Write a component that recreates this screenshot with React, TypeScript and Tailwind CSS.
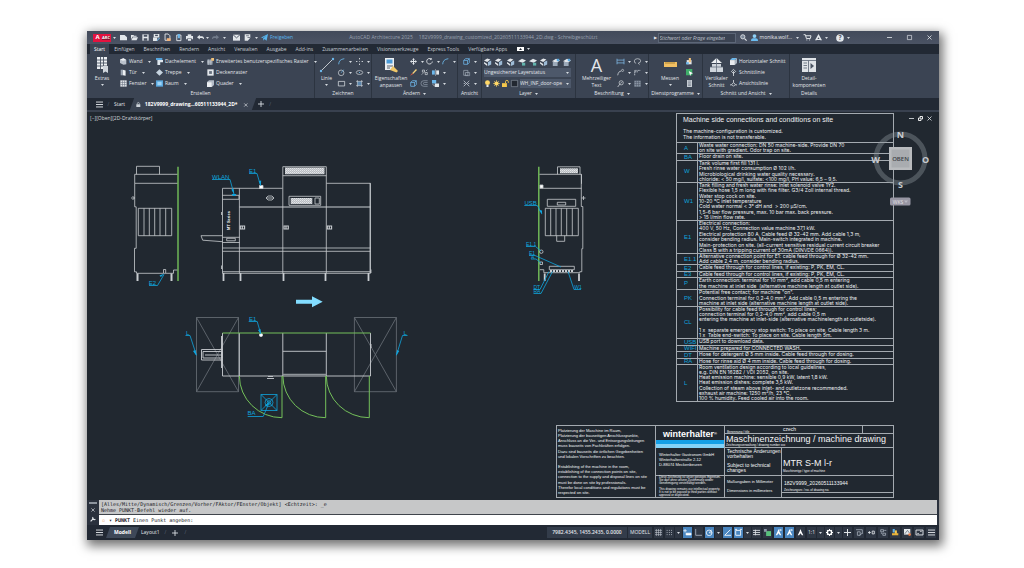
import React from 'react';

const LIGHT = '#e3e7eb';
const SKY = '#6db7ea';

const glyphs: Record<string, React.ReactNode> = {
  newFile: <path d="M0 1.500h6.500l3.500 3V9H0z" fill={LIGHT} />,
  open: <><path d="M0 1.500h3.500l1 1H8V4H2L0 8z" fill={LIGHT} /><path d="M2.500 4.800H10L8 9H.6z" fill={LIGHT} /></>,
  save: <><path d="M.5.5h9v9h-9z" fill={LIGHT} /><path d="M2.500 1h5v3h-5zM2.500 6h5v3.500h-5z" fill="#4a5262" /></>,
  saveAs: <><path d="M1 0h8v5H1z" fill={LIGHT} /><path d="M3 1h4v2H3z" fill="#4a5262" /><path d="M0 5h6v5H0z" fill={LIGHT} /><path d="M5 9.500 9 5l1 1-4 4z" fill={SKY} /></>,
  cloudFile: <><path d="M1.500 0h4.500l2.500 2.500V9h-7z" fill="none" stroke={LIGHT} strokeWidth="1.300" /><path d="M4 6h5.500v4H4z" fill="#f0b27a" /></>,
  phone: <><path d="M2.500 1.500h6v8h-6z" fill="none" stroke={LIGHT} strokeWidth="1.300" /><path d="M4 0h3v6H4z" fill={SKY} /></>,
  print: <><path d="M2.500.5h5V3h-5z" fill={LIGHT} /><path d="M0 3h10v4.500H8V6H2v1.500H0zM2.800 6.700h4.400v2.800H2.800z" fill={LIGHT} /></>,
  undo: <path d="M0 4.500 4 1v2.300h3.500Q10 3.500 10 7H8.500Q8.500 5.500 7 5.700H4V8z" fill={LIGHT} />,
  redo: <path d="M10 4.500 6 1v2.300H2.500Q0 3.500 0 7h1.500Q1.500 5.500 3 5.700h3V8z" fill="#727b8a" />,
  envelope: <><path d="M0 1h10v8.500H0z" fill={LIGHT} /><path d="m0 1 5 4.500L10 1" fill="none" stroke="#4a5262" strokeWidth="1.300" /></>,
  sheet: <><path d="M1 .5h8v5L5.500 9.500H1z" fill={LIGHT} /><path d="M3 2.500h4M5 5h4" stroke="#4a5262" /></>,
  plane: <path d="M0 5 10 0 8 9.500 5 7 3.500 9.500 3 6 8 2 2 5.700z" fill="#58b5ee" />,
  search: <><circle cx="4" cy="4" r="3" fill="#7b8798" stroke={LIGHT} strokeWidth="1.200" /><path d="m6.500 6.500 3 3" stroke={LIGHT} strokeWidth="1.600" /></>,
  user: <><circle cx="5" cy="3" r="2.700" fill="#8ed0f6" /><path d="M0 10q0-4 3-4h4q3 0 3 4z" fill="#6bbcf0" /></>,
  cart: <path d="M0 1h2l1.500 5.500H9L10 2.500H3M4 8.500h.1M8 8.500h.1" fill="none" stroke={LIGHT} strokeWidth="1.400" strokeLinecap="round" />,
  autodesk: <path d="M5 0 10 9H7.500L5 4.500 2.500 9H0zM3 7h4v1.500H3z" fill={LIGHT} />,
  help: <><circle cx="5" cy="5" r="4.800" fill={LIGHT} /><text x="5" y="7.800" fontSize="8" fontWeight="700" textAnchor="middle" fill="#4a5262">?</text></>,
  wall: <><path d="m0 2 5-1.500L9 3v6L5 9.500 0 7z" fill="#b9c1cb" /><path d="m0 2 5-1.500L9 3 4 4z" fill="#eef1f4" /></>,
  door: <><path d="M1 1h3v8H1z" fill="#9ba5b3" /><path d="m4 1 4 1v7.500L4 9z" fill="#eef1f4" /></>,
  window: <><path d="M.5.5h9v9h-9z" fill={LIGHT} /><path d="M3.500.5v9M6.500.5v9M.5 3.500h9M.5 6.500h9" stroke="#66707f" strokeWidth=".8" /></>,
  roof: <><path d="M0 0h9v3H0z" fill="#58a7df" /><path d="M2 3h8v3H6v4H2z" fill="#dfe7ee" /></>,
  stairs: <path d="M0 5 5 .5 10 5 5 9.500z" fill="#c6d3df" />,
  room: <><path d="M0 .5h10v9H0z" fill="#58a7df" /><path d="M2 2.500h6v5H2z" fill="#9fd4f7" /></>,
  grid: <><path d="M0 2h8v8H0z" fill="#707b8b" /><path d="M0 4.500h8M0 7h8M2.500 2v8M5.500 2v8" stroke={LIGHT} strokeWidth=".8" /><path d="M6 0h4v4H6z" fill="#f1c27a" /></>,
  ceiling: <><path d="M.5.5h9v9h-9z" fill={LIGHT} /><path d="M3 3h4v4H3z" fill="#66707f" /></>,
  box: <><path d="M0 3h7v7H0z" fill="#eceff2" /><path d="m0 3 3-2.500h7L7 3zM7 3l3-2.500V7l-3 3z" fill="#b4bcc8" /></>,
  arc: <path d="M1 9Q1 2 9 1" fill="none" stroke={SKY} strokeWidth="1.200" />,
  circle: <><circle cx="4.500" cy="5.500" r="4" fill="none" stroke={LIGHT} strokeWidth=".9" /><path d="M4.500 5.500 8 1" stroke={SKY} /></>,
  rect: <path d="M.5 2h9v6.500h-9z" fill="none" stroke={LIGHT} />,
  points: <path d="M5 0v2M5 8v2M0 5h2M8 5h2M5 4.500v1" stroke={LIGHT} strokeWidth="1.200" />,
  ellipse: <><ellipse cx="5" cy="5" rx="4.600" ry="2.800" fill="none" stroke={LIGHT} strokeWidth=".9" /><path d="M4.300 5h1.400" stroke={SKY} strokeWidth="1.400" /></>,
  hatch: <><path d="M2 2h6v6H2z" fill="#5b86ad" /><path d="M2 0v10M8 0v10M0 2h10M0 8h10" stroke={LIGHT} strokeWidth=".7" /></>,
  move: <path d="M5 0 7 2.500H5.700v1.800h1.800V3L10 5 7.500 7V5.700H5.700v1.800H7L5 10 3 7.500h1.300V5.700H2.500V7L0 5l2.500-2v1.300h1.800V2.500H3z" fill={LIGHT} />,
  rotate: <path d="M7.500 1.500A4 4 0 1 0 9 5M5.500 2.500 8 1.800 7 0" fill="none" stroke={LIGHT} strokeWidth="1.200" />,
  brush: <><path d="M3 6 8.500 0 10 1.500 4.500 7z" fill="#f4d27c" /><path d="M0 9.500 3 6l1.500 1z" fill="#e0563f" /></>,
  copy: <path d="M2 1.500h3v3H2zM6 5h3v3H6zM1 8l2-2M7 3l2-2" fill="none" stroke={LIGHT} strokeWidth=".9" />,
  mirror: <><path d="M0 2h4v6H0z" fill={SKY} /><path d="M6 2h4v6H6z" fill={LIGHT} /><path d="M5 0v10" stroke={LIGHT} strokeWidth=".6" /></>,
  cube: <path d="M1 3.500h5.500V9H1zM1 3.500 3.500 1H9L6.500 3.500M9 1v5.500L6.500 9" fill="none" stroke={SKY} strokeWidth="1.100" />,
  offset: <path d="M9.500 1H4a4 4 0 0 0 0 8h5.500M9.500 3.500H5a1.500 1.500 0 0 0 0 3h4.500" fill="none" stroke="#9aa6b5" strokeWidth=".9" />,
  align: <><path d="M0 0h6v5H0z" fill={SKY} /><path d="M4 5h6v5H4z" fill={LIGHT} /><path d="m1 6 3 3" stroke={LIGHT} /></>,
  section: <path d="M1 2h6v7H1zM3.500 5h6v4.500h-6z" fill="none" stroke="#a9b3c0" strokeWidth=".9" />,
  cross: <path d="m1 1 8 8M9 1 1 9M1 5h2M7 5h2" stroke="#c3cad3" strokeWidth="1.100" />,
  layers: <><path d="m0 3 4-2.500L8 2 4 5zM0 5l4 2.500V10L0 7z" fill={LIGHT} /><path d="m5 5 4-2v5L5 10z" fill="#9dbbd6" /></>,
  layersB: <><path d="m0 4 5-3 5 2-4 3z" fill={LIGHT} /><path d="M5 6h4v3.500H5z" fill="#62b4ad" /></>,
  layersC: <><path d="m0 4 5-3 5 2-4 3z" fill={LIGHT} /><path d="M1 5h6v5H1z" fill="#9ba9b9" /><path d="M6 1h3v3H6z" fill="#58a7df" /></>,
  bulb: <><circle cx="5" cy="3.800" r="3.500" fill="#ffd766" /><path d="M3.500 7h3v3h-3z" fill={LIGHT} /></>,
  sun: <><circle cx="5" cy="5" r="3" fill="#ffd766" /><path d="M5 0v10M0 5h10M1.500 1.500l7 7M8.500 1.500l-7 7" stroke="#ffd766" strokeWidth=".8" /></>,
  padlock: <><path d="M0 4.500h7V10H0z" fill="#f5c84c" /><path d="M5 4.500V2.500a2 2 0 0 1 4 0V4" fill="none" stroke="#f5c84c" strokeWidth="1.300" /></>,
  swatch: <path d="M.5.500h9v9h-9z" fill="#222831" stroke="#97a0ad" strokeWidth=".8" />,
  dimension: <path d="M0 1v8M10 1v8M0 3h10M0 7h10" stroke="#7fb9e4" strokeWidth="1.100" />,
  leader: <><path d="M1 9Q2 3 6 3" fill="none" stroke={LIGHT} /><circle cx="8" cy="2" r="1.500" fill="none" stroke={LIGHT} strokeWidth=".8" /></>,
  leaderB: <><path d="M1 10 4 6" fill="none" stroke={LIGHT} /><circle cx="6" cy="4" r="3" fill="none" stroke={LIGHT} strokeWidth=".9" /><path d="M4.500 5 7.500 3" stroke={LIGHT} strokeWidth=".8" /></>,
  cloud: <path d="M3 7.500Q0 7 .5 4T5 1q4.500 0 4.500 3T6 7.500l2 2" fill="none" stroke={LIGHT} strokeWidth=".9" />,
  tag: <path d="M1 9V2h3M5 2h4M1 4h5" fill="none" stroke="#c3cad3" strokeWidth="1.200" strokeDasharray="2 .6" />,
  table: <><path d="M.5 1h9v8.500h-9z" fill="#8b96a5" /><path d="M.5 3.500h9M.5 6.500h9M3.500 1v8.500M6.500 1v8.500" stroke="#4a5362" strokeWidth=".7" /></>,
  tools: <><path d="M1 3h7v6H1z" fill={LIGHT} /><path d="M4 0h3v6H4z" fill="#f1c27a" /><path d="M0 6h4v3H0z" fill={SKY} /></>,
  green: <><path d="M0 0h9v9H0z" fill="#3fae6a" /><path d="m4 3 6 3-3 1-1 3z" fill="#fff" /></>,
  calc: <><path d="M1.500 0h7v10h-7z" fill="#cdd3da" /><path d="M3 1.500h4M3 4h4M3 6h4M3 8h4" stroke="#596372" strokeWidth=".9" /></>,
  secBox: <><path d="M0 3h7v7H0z" fill="#e7eaee" /><path d="m0 3 3-3h7L7 3z" fill="#6db7ea" /><path d="m7 3 3-3v7l-3 3z" fill="#aab4c0" /></>,
  secLine: <path d="M5 .5 8 3.500 5 6.500 2 3.500zM5 3v7" fill="none" stroke={LIGHT} strokeWidth="1.100" />,
  viewLine: <path d="M0 7h2.500M7.500 7H10M5 0v3M2.500 6.500 5 3.500l2.500 3L5 9z" fill="none" stroke={LIGHT} strokeWidth="1.100" />,
  stGrid: <path d="M2 0v10M5 0v10M8 0v10M0 2h10M0 5h10M0 8h10" stroke="#c3cad3" strokeWidth=".8" />,
  stDots: <path d="M1 2h9M1 5h9M1 8h9" stroke="#c3cad3" strokeWidth="1.200" strokeDasharray="1.200 2" />,
  stSnap: <path d="M1.500 0v5M-1 2.500h5M3 6h7v2.500H3z" fill="#fff" stroke="#fff" strokeWidth="1" />,
  stOrtho: <path d="M1 0v9h9" fill="none" stroke="#aab3bf" strokeWidth="1.200" />,
  stPolar: <><circle cx="4.500" cy="5.500" r="4" fill="none" stroke="#fff" strokeWidth="1.100" /><path d="M4.500 5.500H9M4.500 5.500 8 1" stroke="#fff" /></>,
  stAngle: <path d="M9 1 1 9h9" fill="none" stroke="#fff" strokeWidth="1.200" />,
  stSquare: <path d="M1 2h7v7H1zM0 .5h3M7 .5h3" fill="none" stroke="#fff" strokeWidth="1.200" />,
  stLines: <path d="M0 2h10M0 5h10M0 8h10M3.500 1v8" stroke="#dfe3e8" strokeWidth="1.200" />,
  stGreen: <><path d="M3 3h7v7H3z" fill="#58c17c" /><path d="M0 0h4v4H0z" fill="#8c97a6" /></>,
  stPerson: <path d="M5 0 6.500 4 9 9H7L5 6 3 9H1L3.500 4z" fill="#fff" />,
  stPersonX: <><path d="M5 0 6.500 4 9 9H7L5 6 3 9H1L3.500 4z" fill="#fff" /><path d="M7.500 0v3M6 1.500h4" stroke="#fff" strokeWidth=".9" /></>,
  gear: <><circle cx="5" cy="5" r="3" fill="none" stroke="#fff" strokeWidth="2" /><path d="M5 0v2M5 8v2M0 5h2M8 5h2M1.500 1.500l1.400 1.400M7.100 7.100l1.400 1.400M8.500 1.500 7.100 2.900M2.900 7.100 1.500 8.500" stroke="#fff" strokeWidth="1.500" /></>,
  plus: <path d="M5 0v10M0 5h10" stroke="#e4e8ec" strokeWidth="1.400" />,
  stIso: <path d="M0 1h9v6M2 4h4v5H2zM5 9l4-3" fill="none" stroke="#aab3bf" strokeWidth="1.100" />,
  stZero: <path d="M0 5h4M2 3v4M6 3h3v4H6z" fill="none" stroke="#e4e8ec" strokeWidth="1.200" />,
  stNodes: <path d="M1 1h4v3H1zM6 2h3M4 6h4v3H4zM2 5v2" fill="none" stroke="#aab3bf" strokeWidth="1.100" />,
  stWarn: <><path d="M1 0h3v5H1z" fill="#5fb0e8" /><path d="M4 2h3v6H4z" fill="#f5c84c" /><path d="M0 6h9v3H0z" fill="#e8b23a" /></>,
  stImage: <><path d="M0 0h9v8H0z" fill="#e4e8ec" /><path d="m1 7 4-5 3 4" fill="none" stroke="#59636f" /><circle cx="8" cy="8" r="2" fill="#e37b4a" /></>,
  stScreen: <path d="M0 1.500h10v7H0zM2 6.500h2M6 3.500h2" fill="none" stroke="#e4e8ec" strokeWidth="1.300" />,
  menu: <path d="M0 1.500h10M0 5h10M0 8.500h10" stroke="#e4e8ec" strokeWidth="1.300" />,
  lock: <><path d="M1 4.500h8V10H1z" fill="#cdd3da" /><path d="M3 4.500V3a2 2 0 0 1 4 0v1.500" fill="none" stroke="#cdd3da" strokeWidth="1.300" /></>,
  close: <path d="m1 1 8 8M9 1 1 9" stroke="#e4e8ec" strokeWidth="1.600" />,
  minimise: <path d="M0 5h10" stroke="#e4e8ec" strokeWidth="1.600" />,
  maximise: <path d="M.800.800h8.400v8.400H.800z" fill="none" stroke="#e4e8ec" strokeWidth="1.300" />,
  restore: <path d="M1 4h5v5H1zM4 3V1h5v5H7" fill="none" stroke="#fff" strokeWidth="1.800" />,
};

function Ico({ n, className = 'size-[7px]' }: { n: string; className?: string }) {
  return <svg viewBox="0 0 10 10" aria-hidden="true" className={`shrink-0 overflow-visible ${className}`}>{glyphs[n]}</svg>;
}

function Caret() {
  return <svg viewBox="0 0 6 4" aria-hidden="true" className="h-[2px] w-[3px] shrink-0"><path d="M0 0h6L3 4z" fill="#d5dae0" /></svg>;
}

function Cell({ n, label, caret = false, className = 'w-[11px]' }: { n: string; label: string; caret?: boolean; className?: string }) {
  return (
    <button type="button" aria-label={label} className={`flex h-[11px] shrink-0 items-center gap-[4px] ${className}`}>
      <Ico n={n} />{caret && <Caret />}
    </button>
  );
}

function Item({ n, children, caret = false }: { n: string; children: string; caret?: boolean }) {
  return (
    <button type="button" className="flex h-[11px] items-center gap-[2px] whitespace-nowrap">
      <Ico n={n} /><span>{children}</span>{caret && <span className="pl-[3px]"><Caret /></span>}
    </button>
  );
}

function Big({ icon, lines, caret = false, className }: { icon: React.ReactNode; lines: string[]; caret?: boolean; className: string }) {
  return (
    <button type="button" className={`flex h-[33px] shrink-0 flex-col items-center whitespace-nowrap leading-[7px] ${className}`}>
      <span className="mb-[2px] flex h-[17px] items-center">{icon}</span>
      {lines.map((l) => <span key={l}>{l}</span>)}
      {caret && <span className="flex h-[5px] items-center"><Caret /></span>}
    </button>
  );
}

function Panel({ title, caret = false, className, children }: { title: string; caret?: boolean; className: string; children: React.ReactNode }) {
  return (
    <section aria-label={title} className={`flex shrink-0 flex-col border-r border-[#2c3440] pt-[2px] ${className}`}>
      <div className="flex h-[33px]">{children}</div>
      <h2 className="flex h-[9px] items-center justify-center gap-[3px]">{title}{caret && <Caret />}</h2>
    </section>
  );
}

function TitleBar() {
  const files: [string, string][] = [['newFile', 'Neu'], ['open', 'Öffnen'], ['save', 'Speichern'], ['saveAs', 'Speichern unter'], ['cloudFile', 'Aus Web öffnen'], ['phone', 'In Web speichern'], ['print', 'Plotten'], ['undo', 'Rückgängig']];
  return (
    <header className="flex h-[13px] items-center bg-linear-to-b from-[#424a5a] to-[#4b5364] pl-[6px] pr-[7px]">
      <button type="button" className="flex h-[8px] items-center bg-[#e4123f] text-[5px] font-bold text-white">
        <span className="w-[9px] text-center text-[6px]">A</span><span className="mr-px w-[8px] bg-[#8e1230] text-center text-[4px] leading-[4px]">ARC</span>
      </button>
      <span className="ml-[2px] mr-[2px]"><Caret /></span>
      {files.map(([n, l]) => <button key={n} type="button" aria-label={l} className="flex w-[11px] justify-center"><Ico n={n} /></button>)}
      <Caret />
      <button type="button" aria-label="Wiederholen" className="ml-[3px] mr-[4px]"><Ico n="redo" /></button>
      <Caret />
      <button type="button" aria-label="Senden" className="ml-[7px]"><Ico n="envelope" /></button>
      <button type="button" aria-label="Blatt" className="ml-[4px] mr-[4px]"><Ico n="sheet" /></button>
      <Caret />
      <button type="button" className="ml-[3px] flex items-center gap-[2px] text-[#58b5ee]"><Ico n="plane" />Freigeben</button>
      <h1 className="min-w-0 flex-1 truncate px-[4px] text-center text-[#9aa2b0]"><span className="pr-[6px]">AutoCAD Architecture 2025</span>182V9999_drawing_customized_20260511133944_2D.dwg - Schreibgeschützt</h1>
      <span className="text-[4px]">▶</span>
      <input type="search" aria-label="Suche" placeholder="Stichwort oder Frage eingeben" className="ml-[1px] h-[10px] w-[78px] border border-[#5c6677] bg-[#3b4352] px-px italic placeholder:text-[#c0c6cf]" />
      <button type="button" aria-label="Suchen" className="ml-[4px]"><Ico n="search" /></button>
      <button type="button" className="ml-[4px] flex items-center gap-[2px]"><Ico n="user" />monika.wolf...</button>
      <span className="ml-[4px] mr-[5px]"><Caret /></span>
      <button type="button" aria-label="Warenkorb"><Ico n="cart" /></button>
      <button type="button" aria-label="Autodesk" className="ml-[4px] mr-[3px]"><Ico n="autodesk" /></button>
      <Caret />
      <button type="button" aria-label="Hilfe" className="ml-[8px] mr-[3px]"><Ico n="help" className="size-[8px]" /></button>
      <Caret />
      <div className="ml-[37px] flex gap-[15px]">
        {[['minimise', 'Minimieren'], ['maximise', 'Maximieren'], ['close', 'Schließen']].map(([n, l]) => <button key={n} type="button" aria-label={l}><Ico n={n} className="size-[5px]" /></button>)}
      </div>
    </header>
  );
}

function MenuTabs() {
  const tabs = ['Einfügen', 'Beschriften', 'Rendern', 'Ansicht', 'Verwalten', 'Ausgabe', 'Add-ins', 'Zusammenarbeiten', 'Visionswerkzeuge', 'Express Tools', 'Verfügbare Apps'];
  return (
    <nav className="flex h-[10px] items-center bg-[#222934] pl-[3px] text-[#c9ced6]">
      <button type="button" className="mr-[5px] h-full bg-[#3b4453] px-[4px] text-white">Start</button>
      <div className="flex items-center gap-[9px]">
        {tabs.map((t) => <button key={t} type="button" className="whitespace-nowrap">{t}</button>)}
        <button type="button" aria-label="Ribbon minimieren" className="ml-px flex items-center gap-[3px]">
          <svg viewBox="0 0 7 4" aria-hidden="true" className="h-[4px] w-[7px]"><path d="M0 0h7v4H0z" fill="#fff" /><path d="M2 3 3.500 1 5 3z" fill="#222934" /></svg><Caret />
        </button>
      </div>
    </nav>
  );
}

function Ribbon() {
  return (
    <div className="flex h-[44px] bg-[#3b4453]">
      <Panel title="Erstellen" className="w-[228px]">
        <Big className="w-[30px]" caret lines={['Extras']} icon={<svg viewBox="0 0 11 16" className="h-[16px] w-[11px]"><path d="M0 0h10v12H0z" fill="#eceff2" /><path d="M0 3h10M0 6h10M0 9h10M3.500 0v12M6.500 0v12" stroke="#4b5564" strokeWidth=".9" /><path d="M6 9h5v7l-2.500-1.500L6 16z" fill="#cfd5dc" /></svg>} />
        <div className="flex w-[36px] flex-col pl-[3px]"><Item n="wall" caret>Wand</Item><Item n="door" caret>Tür</Item><Item n="window" caret>Fenster</Item></div>
        <div className="flex w-[51px] flex-col pl-[3px]"><Item n="roof" caret>Dachelement</Item><Item n="stairs" caret>Treppe</Item><Item n="room" caret>Raum</Item></div>
        <div className="flex flex-col pl-[3px]"><Item n="grid" caret>Erweitertes benutzerspezifisches Raster</Item><Item n="ceiling">Deckenraster</Item><Item n="box" caret>Quader</Item></div>
      </Panel>
      <Panel title="Zeichnen" className="w-[57px]">
        <Big className="w-[23px]" caret lines={['Linie']} icon={<svg viewBox="0 0 16 16" className="size-[16px]"><path d="M2 14 14 2" stroke={LIGHT} strokeWidth=".8" /><circle cx="2" cy="14" r="1.200" fill={SKY} /><circle cx="14" cy="2" r="1.200" fill={SKY} /></svg>} />
        <div className="flex flex-col"><Cell className="w-[18px]" caret n="arc" label="Bogen" /><Cell className="w-[18px]" caret n="circle" label="Kreis" /><Cell className="w-[18px]" caret n="rect" label="Rechteck" /></div>
        <div className="flex flex-col"><Cell className="w-[14px]" caret n="points" label="Punkt" /><Cell className="w-[14px]" caret n="ellipse" label="Ellipse" /><Cell className="w-[14px]" caret n="hatch" label="Schraffur" /></div>
      </Panel>
      <Panel title="Ändern" caret className="w-[86px]">
        <Big className="w-[38px]" lines={['Eigenschaften', 'anpassen']} icon={<svg viewBox="0 0 14 16" className="h-[16px] w-[14px]"><path d="M1 1h9v12H1z" fill="#eceff2" /><path d="M2.500 2.500h6v4h-6z" fill="#4b9bd8" /><path d="M3 9h6M3 11h3" stroke="#59636f" /><path d="m6 13 3-4 5 5-1.500 1.500z" fill="#f0c869" /></svg>} />
        <div className="flex flex-col">
          <div className="flex"><Cell className="w-[16px]" caret n="move" label="Schieben" /><Cell className="w-[16px]" caret n="rotate" label="Drehen" /><Cell className="w-[14px]" caret n="arc" label="Abrunden" /></div>
          <div className="flex"><Cell n="brush" label="Löschen" /><Cell n="copy" label="Kopieren" /><Cell className="w-[16px]" caret n="mirror" label="Spiegeln" /></div>
          <div className="flex"><Cell n="cube" label="Skalieren" /><Cell n="offset" label="Versetzen" /><Cell className="w-[16px]" caret n="align" label="Ausrichten" /></div>
        </div>
      </Panel>
      <Panel title="Ansicht" className="w-[24px]">
        <div className="flex flex-col pl-[5px]"><Cell className="w-[16px]" caret n="cube" label="3D-Ansicht" /><Cell className="w-[16px]" caret n="section" label="Schnittebene" /><Cell className="w-[16px]" caret n="cross" label="Ausblenden" /></div>
      </Panel>
      <Panel title="Layer" caret className="w-[94px]">
        <div className="flex w-full flex-col pl-[2px] pr-[4px]">
          <div className="flex justify-between">{['layers', 'layers', 'layers', 'layersB', 'layersB', 'layers', 'layersC', 'layersC'].map((n, i) => <button key={i} type="button" aria-label={`Layerwerkzeug ${i + 1}`} className="flex h-[11px] items-center"><Ico n={n} className="size-[8px]" /></button>)}</div>
          <label className="relative my-px flex h-[9px] items-center bg-[#4d586a]">
            <select aria-label="Layerstatus" className="w-full appearance-none bg-transparent"><option>Ungesicherter Layerstatus</option></select>
            <span className="absolute right-[2px] flex"><Caret /></span>
          </label>
          <div className="flex h-[11px] items-center gap-[2px]">
            <Ico n="bulb" /><Ico n="sun" /><Ico n="padlock" /><Ico n="swatch" />
            <label className="relative flex h-[9px] flex-1 items-center bg-[#4d586a]">
              <select aria-label="Layer" className="w-full appearance-none bg-transparent"><option>WH_INF_door-ope</option></select>
              <span className="absolute right-[2px] flex"><Caret /></span>
            </label>
          </div>
        </div>
      </Panel>
      <Panel title="Beschriftung" caret className="w-[73px]">
        <Big className="w-[41px]" lines={['Mehrzeiliger', 'Text']} icon={<span className="text-[18px] leading-[24px]">A</span>} />
        <div className="flex flex-col"><Cell className="w-[17px]" caret n="dimension" label="Bemaßung" /><Cell className="w-[17px]" caret n="leader" label="Führungslinie" /><Cell className="w-[17px]" caret n="leaderB" label="Multi-Führungslinie" /></div>
        <div className="flex flex-col"><Cell className="w-[14px]" caret n="cloud" label="Revisionswolke" /><Cell className="w-[14px]" caret n="tag" label="Beschriftungsobjekt" /><Cell className="w-[14px]" caret n="table" label="Tabelle" /></div>
      </Panel>
      <Panel title="Dienstprogramme" caret className="w-[54px]">
        <Big className="w-[37px] pl-[5px]" caret lines={['Messen']} icon={<svg viewBox="0 0 13 5" className="h-[5px] w-[13px]"><path d="M0 0h13v5H0z" fill="#f2c063" /><path d="M2 0v2M4 0v2M6 0v2M8 0v2M10 0v2" stroke="#8f6a24" strokeWidth=".7" /></svg>} />
        <div className="flex flex-col"><Cell n="tools" label="Auswahl" /><Cell n="green" label="Schnellauswahl" /><Cell n="calc" label="Taschenrechner" /></div>
      </Panel>
      <Panel title="Schnitt und Ansicht" caret className="w-[87px]">
        <Big className="w-[27px]" lines={['Vertikaler', 'Schnitt']} icon={<svg viewBox="0 0 13 14" className="h-[14px] w-[13px]"><path d="M6.500 0 12 5H1z" fill="#eceff2" /><path d="M2 6h9v3h2v5H0V9h2z" fill="#cfd5dc" /><path d="M6.500 0v14M0 9h13" stroke="#66707f" strokeWidth=".8" /></svg>} />
        <div className="flex flex-col"><Item n="secBox">Horizontaler Schnitt</Item><Item n="secLine">Schnittlinie</Item><Item n="viewLine">Ansichtslinie</Item></div>
      </Panel>
      <Panel title="Details" className="w-[38px] border-r-0">
        <Big className="w-[38px]" lines={['Detail-', 'komponenten']} icon={<svg viewBox="0 0 14 14" className="size-[14px]"><path d="M0 0h14v14H0z" fill="#dfe3e8" /><path d="M0 2.500h14M6.500 2.500V14M1.500 5h3.500M1.500 7.500h3.500M1.500 10h3.500" stroke="#687280" strokeWidth=".9" /><path d="M8.500 5v6l3.500-3z" fill="#4b5564" /></svg>} />
      </Panel>
    </div>
  );
}

function FileTabs() {
  return (
    <nav className="flex h-[14px] items-center border-b-2 border-[#39414f] bg-[#222934] pl-[9px]">
      <button type="button" aria-label="Menü"><Ico n="menu" /></button>
      <span className="w-[11px] text-center text-[#5b6575]">/</span>
      <button type="button">Start</button>
      <div className="ml-[7px] flex h-full w-[122px] -skew-x-20 items-center bg-[#3b4453]">
        <div className="flex w-full skew-x-20 items-center gap-[4px] pl-[4px] font-bold text-white">
          <Ico n="lock" className="size-[5px]" /><span className="flex-1 whitespace-nowrap">182V9999_drawing...60511133944_2D*</span>
          <button type="button" aria-label="Tab schließen" className="mr-[6px]"><Ico n="close" className="size-[4px]" /></button>
        </div>
      </div>
      <button type="button" aria-label="Neuer Tab" className="ml-[4px]"><Ico n="plus" className="size-[6px]" /></button>
      <span className="ml-[5px] text-[#5b6575]">/</span>
    </nav>
  );
}

const WHITE = '#c9cdd1';
const BLUE = '#0fa4de';
const GREEN = '#74c05a';

function Drawing() {
  const feet = [223, 240, 283, 325, 368];
  return (
    <svg viewBox="87 124 589 300" className="block w-full" role="img" aria-label="2D-Zeichnung" fontFamily="Liberation Sans, sans-serif" fontSize="6">
      <defs>
        <pattern id="grit" width="2" height="2" patternUnits="userSpaceOnUse"><path d="M0 0h2v2H0z" fill="#b9bdc2" /><path d="M0 0h1v1H0zM1 1h.6v1H1z" fill="#e4e6e8" /></pattern>
      </defs>
      <g fill="none" stroke={WHITE} strokeWidth=".8">
        <path d="M136.500 174.300v-8h23v8M134.700 183.300v-9h43M134.700 183.300h43M134.700 183.300v23.500h1.500V248.300h-1.700v23.500h2v1.500h37v-3.300h4M138.300 208.300h33.400v27.400h-33.400zM144 208.300v27.400M149.300 208.300v27.400M154.700 208.300v27.400M160 208.300v27.400M165.700 208.300v27.400M163.500 273v-3.500h2.200v3.500M131 198h3.700M132.500 196l2 2-2 2" />
        <path d="M137.500 273.500v7.500M171.500 273.500v7.500" strokeWidth="2" />
        <path d="M222.500 188.300V273.300h148V183.300h-44M222.500 188.300h60M239.400 188.300v85M282.800 273V166.700h43.500V273M370 183v90M282.800 175.700h43.500M222.500 195.300h16.500v4h-16.500M222.500 248h148M222.500 251.300h148M222.500 271.700h148M222.500 237.300h17M222.500 242.500h17M226.700 238.300h8.600v2.500h-8.600zM222.500 235.700H201l1.700 4.500 19.800 1.500" />
        <path d="M239.400 207h131" strokeWidth="1.200" />
        {feet.map((x) => <path key={x} d={`M${x + .5} 273v8`} strokeWidth="1.800" />)}
        {[240.300, 284, 327.300].map((x) => <path key={x} d={`M${x} 226h4.300v3h-4.300zM${x + 2} 226v3`} strokeWidth="1.100" />)}
        <path d="M285 167.600h39.500v6.600H285zM290.700 198h21.600v6h-21.600z" fill="url(#grit)" stroke="none" />
        <path d="M289 196.300h31.700v9H289zM315 198h4.300v6H315z" />
        <path d="M266 198h8M268 196l-2 2 2 2h4l2-2-2-2z" />
        <path d="M259.500 185.500h3.500v3h-3.500z" fill="#fff" />
        <path d="M221.500 212v3M221.500 265.500v3.500M371 269.500v3.500" />
      </g>
      <text transform="translate(229.500 230) rotate(-90)" fontSize="4" fontWeight="700" fill="#fff">MT Series</text>
      <path d="M178 166.700V281M538.800 166.700V281" stroke={GREEN} strokeWidth="1.400" />

      <g fill="none" stroke={WHITE} strokeWidth=".8">
        <path d="M539.500 174.300h42v9.500M557.500 174.300v-7.500h22.500v7.500M539.500 188.300h42M581.300 174.300V206.500h1.500v42.200h-1V271.700h-2v1h-36v-3h-4M547.300 199.300h28.400v7h-28.400zM557.300 202.300h8.400v2.700h-8.400zM545.300 208.300h33v27.400h-33zM550.700 208.300v27.400M556 208.300v27.400M561.300 208.300v27.400M566.700 208.300v27.400M572.300 208.300v27.400M556.700 235.700v5.600h8v-5.600M549.300 266.300h25v3.400h-25zM581.500 198h4M583.500 196v4" />
        <path d="M550 271h24" strokeWidth="2" strokeDasharray="2 1" />
        <path d="M544.700 273.500v7.500M579 273.500v7.500" strokeWidth="1.800" />
        <path d="M560 168.300h18v5h-18z" fill="url(#grit)" stroke="none" />
        <path d="M540 185h3v3h-3z" fill="#fff" />
        <circle cx="541.300" cy="251.700" r="1.700" /><path d="M540 262h2.500v2.500H540z" />
      </g>

      <path d="M296 299.700h16v-3.400l10.700 5.400-10.700 5.500v-3.500h-16z" fill="#83ddff" />

      <g fill="none" stroke="#6b7178" strokeWidth=".8">
        <path d="M196.500 317.500h42v74.200h-42zM196.500 317.500l42 74.200M238.500 317.500l-42 74.200M354.400 317.500h42v74.200h-42zM354.400 317.500l42 74.200M396.400 317.500l-42 74.200" />
      </g>
      <g fill="none" stroke={WHITE} strokeWidth=".9">
        <path d="M222.500 333v43h148v-43M239.400 333v43M282.800 333v43M326.300 333v43M282.800 351.300h43.500" />
        <path d="M282.800 374.500h43.500" strokeWidth="1.400" stroke="#8e9499" />
        <path d="M222.500 349.500h-21v10.500h21M203 351.500h19v6.500h-19zM205 355h17M221.500 336v32M371 344v4M267 378.500h7M268 376.500h5" />
        <circle cx="261" cy="335" r="1.600" fill="#fff" />
      </g>
      <path d="M222.500 333h148M239.400 376a42.600 41.700 0 0 0 42.600 41.700V376M282.900 376a42.600 41.700 0 0 0 42.800 41.700V376M326.300 376a43 41.700 0 0 0 43 41.700V376" fill="none" stroke={GREEN} strokeWidth="1" />

      <g fill="none" stroke={BLUE} strokeWidth=".8">
        <path d="M212 179.500h18l4 14.500M249 173.500h8l3.500 12M149 285.500h8.500l6.500-11M185.500 335.500h4.500l6.400 19.500M407.500 335.500h-5l-6 19.500M248.700 321.500h8.500l3.500 12M247.700 416.500h15.500l6-14M261 394.500h16v16h-16zM261 394.500l16 16M277 394.500l-16 16" />
        <circle cx="269" cy="402.500" r="4" /><circle cx="269" cy="402.500" r="1.800" />
        <path d="M524.300 205.500h13l4.500 8M526 246.500h9.500l5.500 4.500M529 255.500h6l26 11.500M531 259h5l5 4M533.500 289.500h6.500l9-18M533.500 293.500h7.500l11.500-22M581 289.500h-7l-6-18" />
      </g>
      <g fill={BLUE}>
        <path d="M231.500 194h5l-1.500 2h-2zM260.700 186l-2-5 2.500-.6zM164.500 273.500l-3.700 3.500-1.300-1.500zM196.500 356l-3.500-5 2.500-1zM396 356l1-6 2.300 1zM261 334.500l-3-4.500 2.500-1zM269 402l-4 3.500 2 1zM234 194l-2.700-4.500 2.300-.8zM542 214.500l-3-4.500 3 .5z" />
        <text x="212" y="178.500">WLAN</text><text x="249" y="172.500">E1</text><text x="148.700" y="284.700">E2</text>
        <text x="186" y="334.500">L</text><text x="403.500" y="334.500">L</text><text x="249" y="320.500">E1</text><text x="247.500" y="415.300">BA</text>
        <text x="524.500" y="204.500">USB</text>
        <g fontSize="5"><text x="526" y="245.500">E1.1</text><text x="529" y="254.500">E1</text><text x="531" y="258.500">A</text><text x="533.500" y="289">DT</text><text x="533.500" y="293">RA</text><text x="574.300" y="289">W1</text></g>
      </g>
    </svg>
  );
}

const connections: { id: string; h: string; lines: string[] }[] = [
  { id: 'A', h: 'h-[10px]', lines: ['Waste water connection: DN 50 machine-side. Provide DN 70', 'on site with gradient. Odor trap on site.'] },
  { id: 'BA', h: 'h-[6px]', lines: ['Floor drain on site.'] },
  { id: 'W', h: 'h-[21px]', lines: ['Tank volume first fill 131 l.', 'Fresh rinse water consumption Ø 102 l/h.', 'Microbiological drinking water quality necessary.', 'chloride: < 50 mg/l, sulfate: <100 mg/l, PH value: 6,5 – 9,5.'] },
  { id: 'W1', h: 'h-[37px]', lines: ['Tank filling and fresh water rinse: Inlet solenoid valve 1Y2.', 'Flexible hose 1,5 m long with fine filter. G3/4 Zoll internal thread.', 'Water stop cock on site.', '10-20 °C inlet temperature', 'Cold water normal < 3° dH and  > 200 µS/cm.', '1,5-6 bar flow pressure, max. 10 bar max. back pressure.', '> 15 l/min flow rate.'] },
  { id: 'E1', h: 'h-[32px]', lines: ['Electrical connection:', '400 V, 50 Hz, Connection value machine 37,1 kW.', 'Electrical protection 80 A, Cable feed Ø 32-42 mm. Add cable 1,3 m,', 'consider bending radius. Main-switch integrated in machine.', 'Main-protection on site. (all-current sensitive residual current circuit breaker', 'Class B with a tripping current of 30mA (DINVDE 0664)).'] },
  { id: 'E1.1', h: 'h-[10px]', lines: ['Alternative connection point for E1: cable feed through for Ø 32-42 mm.', 'Add cable 2,4 m, consider bending radius.'] },
  { id: 'E2', h: 'h-[6px]', lines: ['Cable feed through for control lines, if existing: P, PK, EM, CL.'] },
  { id: 'E3', h: 'h-[5px]', lines: ['Cable feed through for control lines, if existing: P, PK, EM, CL.'] },
  { id: 'P', h: 'h-[11px]', lines: ['Earth connection: terminal for 10 mm², add cable 0,5 m entering', 'the machine at inlet side  (alternative machine length at outlet side).'] },
  { id: 'PK', h: 'h-[16px]', lines: ['Potential free contact; for machine "on".', 'Connection terminal for 0,2-4,0 mm². Add cable 0,5 m entering the', 'machine at inlet side (alternative machine length at outlet side).'] },
  { id: 'CL', h: 'h-[31px]', lines: ['Possibility for cable feed through for control lines;', 'connection terminal for 0,2-4,0 mm², add cable 0,5 m', 'entering the machine at inlet-side (alternative machinelength at outletside).', '', '1 x  separate emergency stop switch: To place on site, Cable length 3 m.', '1 x  Table end-switch: To place on site. Cable length 5m.'] },
  { id: 'USB', h: 'h-[6px]', lines: ['USB port to download data.'] },
  { id: 'WIFI', h: 'h-[5px]', lines: ['Machine prepared for CONNECTED WASH.'] },
  { id: 'DT', h: 'h-[6px]', lines: ['Hose for detergent Ø 5 mm inside. Cable feed through for dosing.'] },
  { id: 'RA', h: 'h-[5px]', lines: ['Hose for rinse aid Ø 4 mm inside. Cable feed through for dosing.'] },
  { id: 'L', h: 'h-[36px]', lines: ['Room ventilation design according to local guidelines,', 'e.g. DIN EN 16282 / VDI 2052, on site.', 'Heat emission machine: sensible 0,9 kW, latent 1,8 kW.', 'Heat emission dishes: complete 3,5 kW.', 'Collection of steam above inlet- and outletzone recommended.', 'exhaust air machine: 1250 m³/h, 23 °C,', '100 % humidity. Feed cooled air into the room.'] },
];

function ConnectionTable() {
  return (
    <table className="w-[218px] shrink-0 border-collapse self-start border border-[#a4aab0] font-['Inter',sans-serif] text-[5px] leading-[5px] text-[#eef0f2]">
      <thead>
        <tr className="h-[29px]">
          <th colSpan={2} className="pl-[6px] text-left align-top font-normal">
            <span className="mt-[1px] block whitespace-nowrap font-['Liberation_Sans',sans-serif] text-[7px] leading-[10px]">Machine side connections and conditions on site</span>
            <span className="mt-[3px] block text-[5px] leading-[6px]">The machine-configuration is customized.<br />The information is not transferable.</span>
          </th>
        </tr>
      </thead>
      <tbody>
        {connections.map((c) => (
          <tr key={c.id} className="border-t border-[#a4aab0]">
            <th scope="row" className="w-[21px] border-r border-[#a4aab0] p-0 pl-[7px] text-left font-['Liberation_Sans',sans-serif] text-[6px] font-normal text-[#0fa4de]">{c.id}</th>
            <td className="p-0 pl-px">
              <div className={`flex flex-col justify-between ${c.h}`}>
                {c.lines.map((l, i) => <span key={i} className="block h-[5px] whitespace-pre">{l}</span>)}
              </div>
            </td>
          </tr>
        ))}
      </tbody>
    </table>
  );
}

function TitleBlock() {
  const note = ['Platzierung der Maschine im Raum,', 'Platzierung der bauseitigen Anschlusspunkte,', 'Anschluss an die Ver- und Entsorgungsleitungen', 'muss bauseits von Fachkräften erfolgen.', 'Dazu sind bauseits die örtlichen Gegebenheiten', 'und lokalen Vorschriften zu beachten.', '', 'Establishing of the machine in the room,', 'establishing of the connection points on site,', 'connection to the supply and disposal lines on site', 'must be done on site by professionals.', 'Therefor local conditions and regulations must be', 'respected on site.'];
  return (
    <div className="mr-[45px] flex h-[73px] w-[338px] self-end border border-[#a4aab0] font-['Liberation_Sans',sans-serif] text-[4px] leading-[5px] text-[#f4f5f6]">
      <div className="flex w-[99px] shrink-0 flex-col justify-between border-r border-[#a4aab0] pb-[2px] pl-px pt-[2px]">
        {note.map((l, i) => <span key={i} className="block h-[5px] whitespace-nowrap">{l}</span>)}
      </div>
      <div className="flex w-[69px] shrink-0 flex-col border-r border-[#a4aab0]">
        <div className="h-[14px] pt-[2px] text-center text-[9px] font-bold leading-[12px] text-white">winterhalter<sup className="text-[4px]">®</sup></div>
        <div className="h-[4px] bg-[#139fe6]" /><div className="h-[4px] bg-[#82d2f7]" />
        <address className="h-[27px] whitespace-nowrap pl-[3px] pt-[4px] not-italic">Winterhalter Gastronom GmbH<br />Winterhalterstraße 2-12<br />D-88074 Meckenbeuren</address>
        <div className="flex-1 whitespace-nowrap border-t border-[#a4aab0] pl-[3px] text-[3px] leading-[3px]">
          Diese Zeichnung ist unser geistiges Eigentum.<br />Sie darf ohne unsere Zustimmung weder<br />Genehmigung vervielfältigt werden.
          <p className="mt-[3px]">This drawing remains our intellectual property.<br />It is not to be passed to third parties without<br />approval or duplicated.</p>
        </div>
      </div>
      <div className="flex min-w-0 flex-1 flex-col">
        <div className="flex h-[8px] border-b border-[#a4aab0]">
          <span className="w-[58px] pl-[2px] pt-[4px] text-[3px] leading-[4px]">Benennung / title</span><span className="flex-1 border-r border-[#a4aab0] pt-px text-[5px]">czech</span><span className="w-[30px]" />
        </div>
        <div className="h-[14px] border-b border-[#a4aab0] pl-px">
          <div className="whitespace-nowrap text-[9px] leading-[10px]">Maschinenzeichnung / machine drawing</div>
          <div className="text-[3px] leading-[3px]">Zeichnungsverwaltung / drawing number xxx</div>
        </div>
        <div className="flex h-[28px] border-b border-[#a4aab0]">
          <div className="w-[57px] whitespace-nowrap border-r border-[#a4aab0] pl-[2px] pt-px text-[5px]">Technische Änderungen<br />vorbehalten<p className="mt-[4px]">Subject to technical<br />changes</p></div>
          <div className="pl-px pt-[10px]"><div className="text-[9px] leading-[10px]">MTR S-M l-r</div><div className="text-[3px] leading-[6px]">Maschinentyp / type of machine</div></div>
        </div>
        <div className="flex flex-1">
          <div className="w-[57px] whitespace-nowrap border-r border-[#a4aab0] pl-[2px] pt-[3px]">Maßangaben in Millimeter<p className="mt-[4px]">Dimensions in millimeters</p></div>
          <div className="flex-1"><div className="h-[12px] pl-[2px] pt-[5px] text-[5px]">182V9999_20260511133944</div><div className="border-b border-[#a4aab0] pl-[2px] text-[3px] leading-[4px]">Zeichnungsnr. / no. of drawing no.</div></div>
        </div>
      </div>
    </div>
  );
}

function ViewCube() {
  return (
    <svg viewBox="868 112 64 98" role="img" aria-label="ViewCube" className="absolute right-[7px] top-0 h-[98px] w-[64px]" fontFamily="Open Sans, sans-serif" fontWeight="700" textAnchor="middle">
      <circle cx="900.500" cy="158.500" r="24.500" fill="none" stroke="#8f959d" strokeOpacity=".4" strokeWidth="5" />
      <path d="M889 147h23v23h-23z" fill="#b9bbbe" /><path d="M891.500 149.500h18v18h-18z" fill="#a9acb0" />
      <text x="900.500" y="161" fontSize="6" fontWeight="600" fill="#3a3f46">OBEN</text>
      <g fontSize="9" fill="#c8cbcf"><text x="900.500" y="137.500">N</text><text x="875.500" y="162.500">W</text><text x="925.500" y="162.500">O</text><text x="900.500" y="188">S</text></g>
      <rect x="890" y="197.500" width="20.500" height="8" rx="1.500" fill="#9896a3" />
      <text x="898" y="203.700" fontSize="5" fontWeight="400" fill="#e3e3e8">WKS</text><path d="M904 200.500h4l-2 2.500z" fill="#b8b7c2" />
    </svg>
  );
}

function Canvas() {
  return (
    <main className="relative flex min-h-[388px] flex-col bg-[#212830] pb-[2px]">
      <div className="flex flex-1">
        <div className="min-w-0 flex-1">
          <p className="h-[12px] pl-[3px] text-[5px] leading-[12px] text-[#d5d9de]">[−][Oben][2D-Drahtkörper]</p>
          <Drawing />
        </div>
        <div className="mr-[45px] pt-px"><ConnectionTable /></div>
      </div>
      <TitleBlock />
      <div className="absolute right-[7px] top-[4px] flex gap-[4px]">
        {[['minimise', 'Ansicht minimieren'], ['restore', 'Ansicht wiederherstellen'], ['close', 'Ansicht schließen']].map(([n, l]) => <button key={n} type="button" aria-label={l}><Ico n={n} className="size-[5px]" /></button>)}
      </div>
      <ViewCube />
    </main>
  );
}

function CommandLine() {
  return (
    <div className="flex h-[25px] bg-[#2a313d] pr-[2px]">
      <div className="flex w-[12px] flex-col items-center gap-[4px] pt-[2px]">
        <span className="h-[2px] w-[8px] bg-[#8d949e]" /><button type="button" aria-label="Befehlszeile schließen"><Ico n="close" className="size-[4px]" /></button>
        <button type="button" aria-label="Anpassen"><svg viewBox="0 0 10 10" className="size-[6px]"><path d="M1 9 6 4M5 2a2.500 2.500 0 1 0 4 3" fill="none" stroke="#e4e8ec" strokeWidth="2" /></svg></button>
      </div>
      <div className="flex flex-1 flex-col font-['DejaVu_Sans_Mono',monospace] text-[5px] text-[#15181c]">
        <div className="h-[15px] whitespace-nowrap border-b border-[#3f444b] bg-[#c6c7c8] pl-[2px] pt-px leading-[6px]">[Alles/Mitte/Dynamisch/Grenzen/Vorher/FAktor/FEnster/Objekt] &lt;Echtzeit&gt;: _e<br />Nehme PUNKT-Befehl wieder auf.</div>
        <label className="flex flex-1 items-center bg-white pl-[3px]">
          <span className="mr-[4px] text-[#e5905b]">▫</span><span className="mr-[3px]">▾</span><b>PUNKT</b><input aria-label="Befehl" defaultValue="Einen Punkt angeben:" className="ml-[3px] min-w-0 flex-1 outline-none" />
        </label>
      </div>
    </div>
  );
}

function StatusBar() {
  const cells: [string, boolean?][] = [['stGrid'], ['stDots'], ['caret'], ['stSnap', true], ['stOrtho'], ['stPolar', true], ['caret'], ['stAngle', true], ['stSquare', true], ['caret'], ['stLines'], ['stGreen'], ['stPersonX', true], ['stPersonX', true], ['stPerson'], ['scale'], ['caret'], ['gear'], ['caret'], ['plus']];
  const tail: [string, string][] = [['stIso', 'Objekte isolieren'], ['stZero', 'Höhe'], ['stNodes', 'Hardware'], ['stWarn', 'Warnungen'], ['stImage', 'Bildstatus'], ['stScreen', 'Vollbild'], ['menu', 'Anpassung']];
  return (
    <footer className="flex h-[15px] items-center bg-[#222934] pl-[9px] pr-[2px]">
      <button type="button" aria-label="Layoutmenü"><Ico n="menu" /></button>
      <button type="button" className="ml-[5px] h-[11px] -skew-x-20 bg-[#3e4858] px-[6px] font-bold text-white"><span className="block skew-x-20">Modell</span></button>
      <button type="button" className="ml-[4px]">Layout1</button>
      <span className="ml-[5px] text-[#5b6575]">/</span>
      <button type="button" aria-label="Neues Layout" className="mx-[6px]"><Ico n="plus" className="size-[6px]" /></button>
      <span className="text-[#5b6575]">/</span>
      <div className="ml-auto flex h-[11px] items-center whitespace-nowrap">
        <span className="mr-px flex h-full w-[80px] items-center justify-center bg-[#333c4a] font-semibold">7982.4345, 1455.2435, 0.0000</span>
        <button type="button" className="mr-px h-full w-[24px] bg-[#333c4a]">MODELL</button>
        {cells.map(([n, on], i) => n === 'caret'
          ? <span key={i} className="flex h-full w-[7px] items-center justify-center bg-[#2f3744]"><Caret /></span>
          : <button key={i} type="button" aria-label={`Zeichenhilfe ${i + 1}`} className="flex h-full w-[11px] items-center justify-center border-x border-[#222934] bg-[#2f3744]">
              {n === 'scale' ? <span className="text-[5px]">1:1</span> : <span className={`flex h-full w-full items-center justify-center ${on ? 'bg-[#4a86c0]' : ''}`}><Ico n={n} /></span>}
            </button>)}
        {tail.map(([n, l]) => <button key={n} type="button" aria-label={l} className="flex h-full w-[12px] items-center justify-center border-x border-[#222934] bg-[#2f3744]"><Ico n={n} /></button>)}
      </div>
    </footer>
  );
}

export default function App() {
  return (
    <div className="min-h-screen bg-white pb-[28px] pl-[87px] pr-[85px] pt-[31px]">
      <div className="bg-[#222934] font-['Open_Sans',sans-serif] text-[5px] leading-[7px] text-[#e3e6ea] shadow-[2px_4px_10px_2px_rgba(0,0,0,0.55)]">
        <TitleBar />
        <MenuTabs />
        <Ribbon />
        <FileTabs />
        <Canvas />
        <CommandLine />
        <StatusBar />
      </div>
    </div>
  );
}
